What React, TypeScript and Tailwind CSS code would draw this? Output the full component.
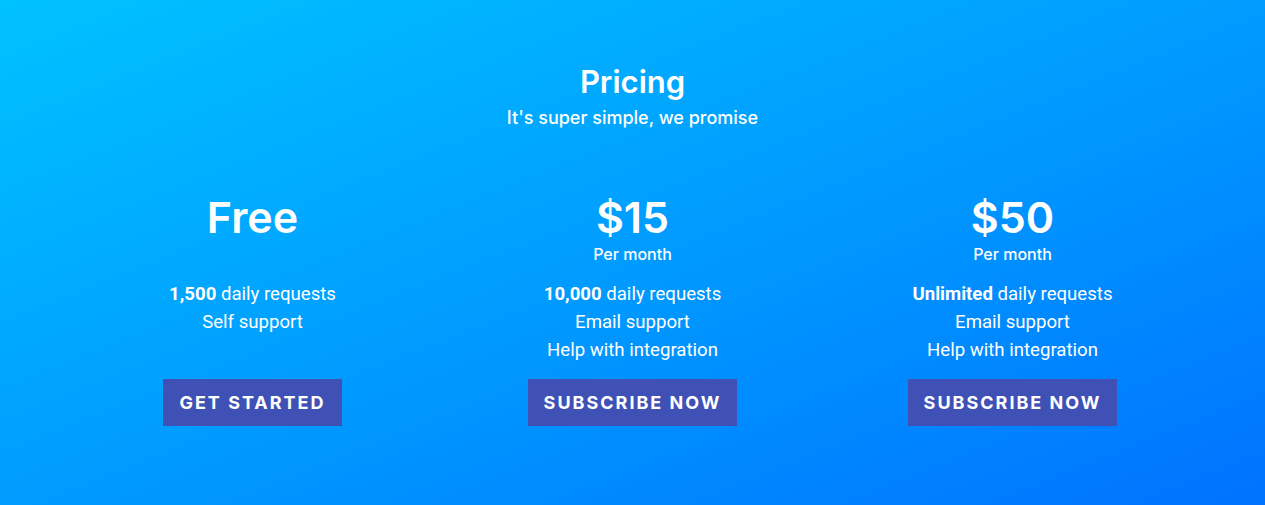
import React from "react";

type Plan = {
  price: string;
  period?: string;
  requests: string;
  features: string[];
  cta: string;
};

const plans: Plan[] = [
  { price: "Free", requests: "1,500", features: ["Self support"], cta: "Get started" },
  {
    price: "$15",
    period: "Per month",
    requests: "10,000",
    features: ["Email support", "Help with integration"],
    cta: "Subscribe now",
  },
  {
    price: "$50",
    period: "Per month",
    requests: "Unlimited",
    features: ["Email support", "Help with integration"],
    cta: "Subscribe now",
  },
];

const heading = { fontFamily: "Inter, 'Noto Sans', sans-serif" };
const body = { fontFamily: "Roboto, 'Liberation Sans', sans-serif" };

export default function App() {
  return (
    <div className="w-full h-[505px] bg-gradient-to-br from-[#00c2ff] to-[#0072ff] text-white overflow-hidden">
      <div className="pt-[62px] flex flex-col items-center">
        <h1 className="text-[31px] leading-[40px] font-semibold" style={heading}>
          Pricing
        </h1>
        <p className="text-[18px] leading-[22px] font-medium mt-[5px]" style={heading}>
          It's super simple, we promise
        </p>
      </div>
      <div className="mx-auto w-[1140px] grid grid-cols-3 mt-[60px]">
        {plans.map((p) => (
          <div key={p.price} className="flex flex-col items-center">
            <div className="h-[84px] flex flex-col items-center">
              <div className="text-[43px] leading-[56px] font-semibold" style={heading}>
                {p.price}
              </div>
              {p.period && (
                <div className="text-[16px] leading-[20px] font-medium -mt-[1px]" style={heading}>
                  {p.period}
                </div>
              )}
            </div>
            <ul className="mt-[7px] text-[18.6px] leading-[28px] text-center h-[87px]" style={body}>
              <li>
                <span className="font-bold">{p.requests}</span> daily requests
              </li>
              {p.features.map((f) => (
                <li key={f}>{f}</li>
              ))}
            </ul>
            <button
              className="mt-[12px] h-[47px] px-4 bg-[#3f51b5] text-[18px] font-bold uppercase tracking-[2px] text-white"
              style={heading}
            >
              {p.cta}
            </button>
          </div>
        ))}
      </div>
    </div>
  );
}
